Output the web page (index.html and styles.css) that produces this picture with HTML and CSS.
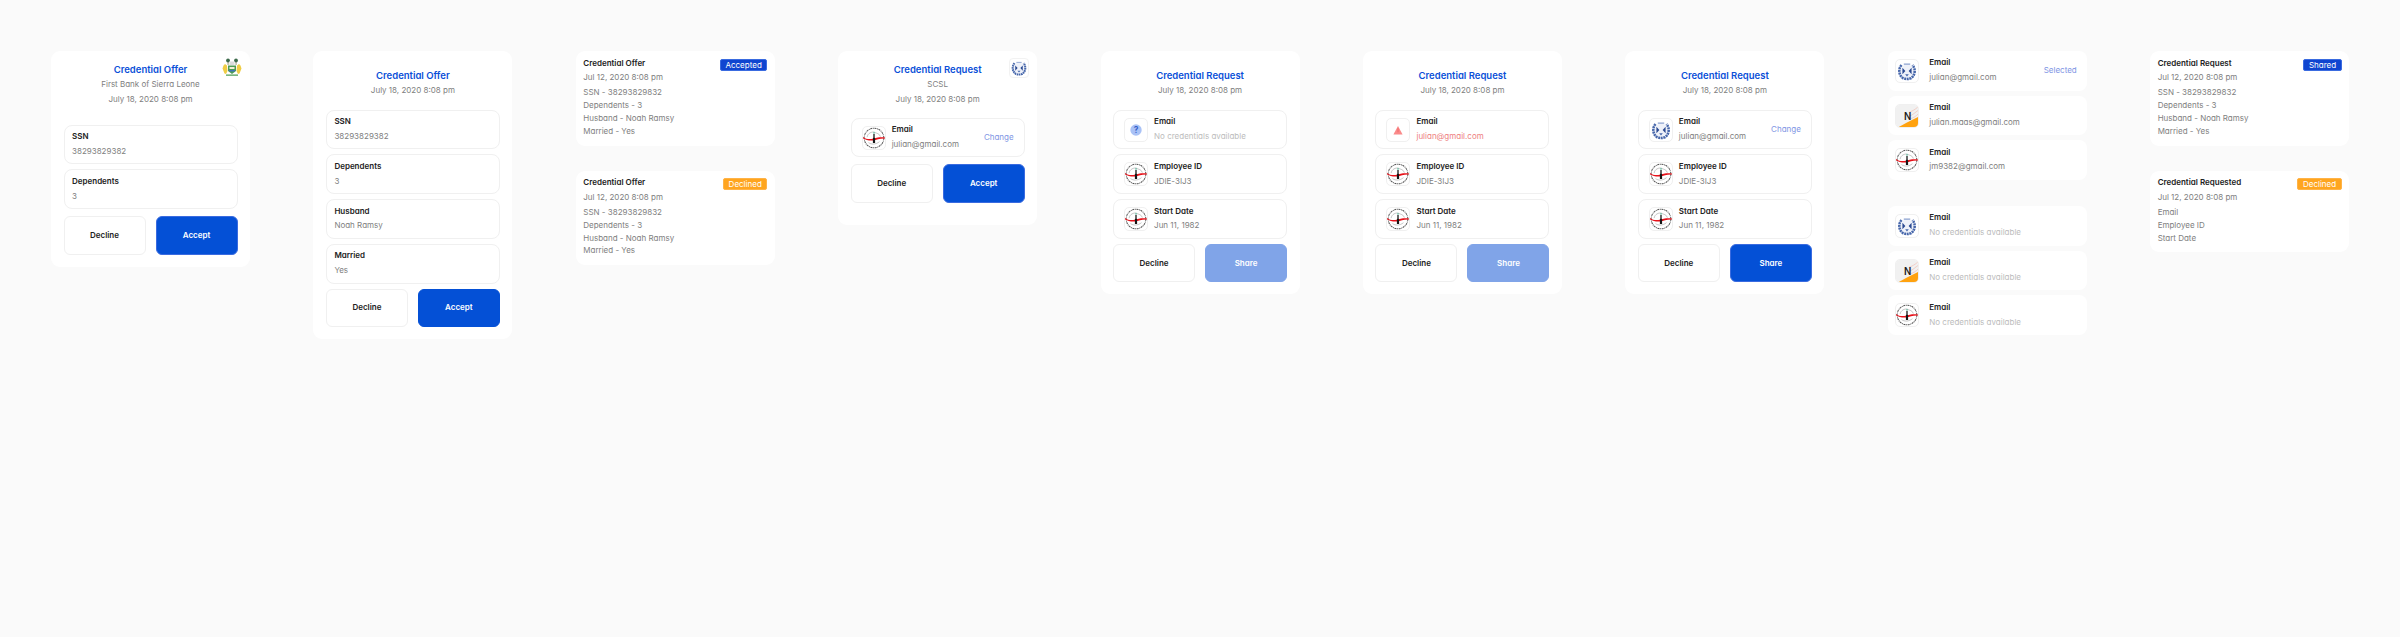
FILE: index.html
```html
<!DOCTYPE html>
<html>
<head>
    <meta charset="utf-8">
    <title>Credential cards</title>
    <link rel="stylesheet" href="styles.css">
</head>
<body>
<svg class="sprites" width="0" height="0">
    <symbol id="seal" viewBox="0 0 24 24">
        <circle cx="12" cy="12" r="10.700" fill="#fff" stroke="#555" stroke-width="1.100" stroke-dasharray="2.200 0.700 1 0.700"/>
        <path d="M4.500 11c.5-4 5-6.500 8.500-5 1.500.8 5 1 6 4.500M6 17c3 2.300 8 2.300 12-1" fill="none" stroke="#a8a8a8" stroke-width="0.700"/>
        <path d="M0 10.800c3 2.200 7 3 10.500 2s8-2 13.500-1.300v1c-6-.2-9 1.400-13 2.200-4 .5-8-.6-11-2.400z" fill="#e6121a"/>
        <path d="M11.300 7.500h1.400v4l.5 1v5h-2.400v-5l.5-1z" fill="#151515"/>
        <rect x="11.500" y="5.300" width="1" height="2.200" fill="#3fae8e"/>
    </symbol>
    <symbol id="wreath" viewBox="0 0 24 24">
        <ellipse cx="12" cy="12" rx="7" ry="7.500" fill="#eef1f9"/>
        <path d="M6 5.500C2.200 10 3 17 8 20c3 1 5 1 8 0 5-3 5.800-10 2-14.500" fill="none" stroke="#4767ab" stroke-width="2.800" stroke-dasharray="2.200 0.700"/>
        <path d="M7 8.500l3.200 3.500-3.200 3.500zM17 8.500l-3.200 3.500 3.200 3.500z" fill="#2b4a92"/>
        <path d="M8.500 4.500h7" stroke="#8ba1d0" stroke-width="1.200"/>
        <path d="M10 15.500h4l-2 2.500z" fill="#4767ab"/>
    </symbol>
    <symbol id="tile" viewBox="0 0 24 24">
        <rect width="24" height="24" fill="#f1f1f1"/>
        <path d="M14 8c3-1 7-3 10-6M15 12c3-1 6-4 9-6M16 15c3-1 6-3 8-5" fill="none" stroke="#f1c3b8" stroke-width="0.800"/>
        <path d="M3 24l9-5 12-6v11z" fill="#ffa20f"/>
    </symbol>
    <symbol id="arms" viewBox="0 0 20 20">
        <circle cx="6" cy="2.500" r="1.900" fill="#3c6a4a"/>
        <circle cx="14" cy="2.500" r="1.900" fill="#3c6a4a"/>
        <rect x="5.700" y="4" width="0.700" height="3" fill="#6b6b4a"/>
        <rect x="13.700" y="4" width="0.700" height="3" fill="#6b6b4a"/>
        <rect x="7.500" y="3.500" width="5" height="3.500" fill="#dcdcdc"/>
        <path d="M3 6l2 1.500L5.500 13l-1.500 3-1.500-.5-2-5 1-3zM17 6l-2 1.500-.5 5.500 1.500 3 1.500-.5 2-5-1-3z" fill="#efcd45"/>
        <path d="M6 7.500h8V13l-4 3-4-3z" fill="#4d9c55"/>
        <path d="M7.500 9h5v2h-5z" fill="#f4f0d6"/>
        <path d="M6.500 12h7l-1 1.500h-5z" fill="#3f74b8"/>
        <path d="M4 16.500h12v1.300H4z" fill="#4d9c55"/>
    </symbol>
</svg>

<div class="board">
    <div class="column">
        <div class="card">
            <svg class="card-logo card-logo--bare"><use href="#arms"/></svg>
            <div class="card-head card-head--wide">
                <div class="card-title">Credential Offer</div>
                <div class="muted">First Bank of Sierra Leone</div>
                <div class="muted">July 18, 2020 8:08 pm</div>
            </div>
            <div class="fields">
                <div class="field"><div class="field-text"><div class="label">SSN</div><div class="muted">38293829382</div></div></div>
                <div class="field"><div class="field-text"><div class="label">Dependents</div><div class="muted">3</div></div></div>
            </div>
            <div class="actions actions--loose">
                <div class="btn">Decline</div>
                <div class="btn btn-primary btn-ring">Accept</div>
            </div>
        </div>
    </div>

    <div class="column">
        <div class="card card--plain">
            <div class="card-head">
                <div class="card-title">Credential Offer</div>
                <div class="muted">July 18, 2020 8:08 pm</div>
            </div>
            <div class="fields">
                <div class="field"><div class="field-text"><div class="label">SSN</div><div class="muted">38293829382</div></div></div>
                <div class="field"><div class="field-text"><div class="label">Dependents</div><div class="muted">3</div></div></div>
                <div class="field"><div class="field-text"><div class="label">Husband</div><div class="muted">Noah Ramsy</div></div></div>
                <div class="field"><div class="field-text"><div class="label">Married</div><div class="muted">Yes</div></div></div>
            </div>
            <div class="actions">
                <div class="btn">Decline</div>
                <div class="btn btn-primary">Accept</div>
            </div>
        </div>
    </div>

    <div class="column column--history">
        <div class="history">
            <span class="badge">Accepted</span>
            <div class="label">Credential Offer</div>
            <div class="muted">Jul 12, 2020 8:08 pm</div>
            <ul class="history-list">
                <li>SSN - 38293829832</li>
                <li>Dependents - 3</li>
                <li>Husband - Noah Ramsy</li>
                <li>Married - Yes</li>
            </ul>
        </div>
        <div class="history">
            <span class="badge badge-orange">Declined</span>
            <div class="label">Credential Offer</div>
            <div class="muted">Jul 12, 2020 8:08 pm</div>
            <ul class="history-list">
                <li>SSN - 38293829832</li>
                <li>Dependents - 3</li>
                <li>Husband - Noah Ramsy</li>
                <li>Married - Yes</li>
            </ul>
        </div>
    </div>

    <div class="column">
        <div class="card card--short">
            <svg class="card-logo"><use href="#wreath"/></svg>
            <div class="card-head card-head--narrow">
                <div class="card-title">Credential Request</div>
                <div class="muted">SCSL</div>
                <div class="muted">July 18, 2020 8:08 pm</div>
            </div>
            <div class="fields">
                <div class="field">
                    <svg class="icon"><use href="#seal"/></svg>
                    <div class="field-text"><div class="label">Email</div><div class="muted">julian@gmail.com</div></div>
                    <span class="link">Change</span>
                </div>
            </div>
            <div class="actions actions--loose">
                <div class="btn">Decline</div>
                <div class="btn btn-primary btn-ring">Accept</div>
            </div>
        </div>
    </div>

    <div class="column">
        <div class="card card--plain">
            <div class="card-head">
                <div class="card-title">Credential Request</div>
                <div class="muted">July 18, 2020 8:08 pm</div>
            </div>
            <div class="fields">
                <div class="field">
                    <svg class="icon" viewBox="0 0 24 24">
                        <circle cx="12" cy="12" r="6.200" fill="#a9c2f6"/>
                        <text x="12" y="15.200" class="icon-mark" text-anchor="middle">?</text>
                    </svg>
                    <div class="field-text"><div class="label">Email</div><div class="faint">No credentials available</div></div>
                </div>
                <div class="field">
                    <svg class="icon"><use href="#seal"/></svg>
                    <div class="field-text"><div class="label">Employee ID</div><div class="muted">JDIE-3IJ3</div></div>
                </div>
                <div class="field">
                    <svg class="icon"><use href="#seal"/></svg>
                    <div class="field-text"><div class="label">Start Date</div><div class="muted">Jun 11, 1982</div></div>
                </div>
            </div>
            <div class="actions">
                <div class="btn">Decline</div>
                <div class="btn btn-primary btn-disabled">Share</div>
            </div>
        </div>
    </div>

    <div class="column">
        <div class="card card--plain">
            <div class="card-head">
                <div class="card-title">Credential Request</div>
                <div class="muted">July 18, 2020 8:08 pm</div>
            </div>
            <div class="fields">
                <div class="field">
                    <svg class="icon" viewBox="0 0 24 24">
                        <path d="M12 7.500l5 9.500H7z" fill="#fa8a8a"/>
                        <path d="M12 10v4.500" stroke="#f26a6a" stroke-width="1"/>
                    </svg>
                    <div class="field-text"><div class="label">Email</div><div class="error">julian@gmail.com</div></div>
                </div>
                <div class="field">
                    <svg class="icon"><use href="#seal"/></svg>
                    <div class="field-text"><div class="label">Employee ID</div><div class="muted">JDIE-3IJ3</div></div>
                </div>
                <div class="field">
                    <svg class="icon"><use href="#seal"/></svg>
                    <div class="field-text"><div class="label">Start Date</div><div class="muted">Jun 11, 1982</div></div>
                </div>
            </div>
            <div class="actions">
                <div class="btn">Decline</div>
                <div class="btn btn-primary btn-disabled">Share</div>
            </div>
        </div>
    </div>

    <div class="column">
        <div class="card card--plain">
            <div class="card-head">
                <div class="card-title">Credential Request</div>
                <div class="muted">July 18, 2020 8:08 pm</div>
            </div>
            <div class="fields">
                <div class="field">
                    <svg class="icon"><use href="#wreath"/></svg>
                    <div class="field-text"><div class="label">Email</div><div class="muted">julian@gmail.com</div></div>
                    <span class="link">Change</span>
                </div>
                <div class="field">
                    <svg class="icon"><use href="#seal"/></svg>
                    <div class="field-text"><div class="label">Employee ID</div><div class="muted">JDIE-3IJ3</div></div>
                </div>
                <div class="field">
                    <svg class="icon"><use href="#seal"/></svg>
                    <div class="field-text"><div class="label">Start Date</div><div class="muted">Jun 11, 1982</div></div>
                </div>
            </div>
            <div class="actions">
                <div class="btn">Decline</div>
                <div class="btn btn-primary btn-ring">Share</div>
            </div>
        </div>
    </div>

    <div class="column column--lists">
        <div class="picker">
            <div class="pick">
                <svg class="icon"><use href="#wreath"/></svg>
                <div class="field-text"><div class="label">Email</div><div class="muted">julian@gmail.com</div></div>
                <span class="link">Selected</span>
            </div>
            <div class="pick">
                <svg class="icon" viewBox="0 0 24 24"><use href="#tile" width="24" height="24"/><text x="12.700" y="16.700" class="tile-letter" text-anchor="middle">N</text></svg>
                <div class="field-text"><div class="label">Email</div><div class="muted">julian.maas@gmail.com</div></div>
            </div>
            <div class="pick">
                <svg class="icon"><use href="#seal"/></svg>
                <div class="field-text"><div class="label">Email</div><div class="muted">jm9382@gmail.com</div></div>
            </div>
        </div>
        <div class="picker">
            <div class="pick">
                <svg class="icon"><use href="#wreath"/></svg>
                <div class="field-text"><div class="label">Email</div><div class="faint">No credentials available</div></div>
            </div>
            <div class="pick">
                <svg class="icon" viewBox="0 0 24 24"><use href="#tile" width="24" height="24"/><text x="12.700" y="16.700" class="tile-letter" text-anchor="middle">N</text></svg>
                <div class="field-text"><div class="label">Email</div><div class="faint">No credentials available</div></div>
            </div>
            <div class="pick">
                <svg class="icon"><use href="#seal"/></svg>
                <div class="field-text"><div class="label">Email</div><div class="faint">No credentials available</div></div>
            </div>
        </div>
    </div>

    <div class="column column--history">
        <div class="history">
            <span class="badge">Shared</span>
            <div class="label">Credential Request</div>
            <div class="muted">Jul 12, 2020 8:08 pm</div>
            <ul class="history-list">
                <li>SSN - 38293829832</li>
                <li>Dependents - 3</li>
                <li>Husband - Noah Ramsy</li>
                <li>Married - Yes</li>
            </ul>
        </div>
        <div class="history">
            <span class="badge badge-orange">Declined</span>
            <div class="label">Credential Requested</div>
            <div class="muted">Jul 12, 2020 8:08 pm</div>
            <ul class="history-list">
                <li>Email</li>
                <li>Employee ID</li>
                <li>Start Date</li>
            </ul>
        </div>
    </div>
</div>
</body>
</html>
```

FILE: styles.css
```css
html, body {
  margin: 0;
  background: #fafafa;
}

body {
  font-family: "Inter", "Lato", sans-serif;
  font-feature-settings: "cv11";
  font-size: 8px;
  line-height: 14.7px;
  color: #808080;
  height: 637px;
  overflow: hidden;
}

.sprites {
  position: absolute;
}

.board {
  display: flex;
  align-items: flex-start;
  gap: 63.4px;
  padding: 51px 0 0 51px;
}

.column {
  flex: 0 0 199px;
  width: 199px;
  display: flex;
  flex-direction: column;
}

.column--history {
  gap: 25px;
}

.column--lists {
  gap: 26px;
}

.card {
  position: relative;
  background: #fff;
  border-radius: 9px;
  padding: 0 12.5px 12px;
}

.card--short {
  padding-bottom: 22px;
}

.card-head {
  text-align: center;
  padding: 17.7px 0 11.7px;
}

.card-head--wide {
  padding: 11.7px 0 18px;
}

.card-head--narrow {
  padding: 11.7px 0 11px;
}

.card-title {
  font-size: 9.5px;
  font-weight: 600;
  color: #0a4fd8;
}

.card-logo {
  position: absolute;
  top: 7px;
  right: 8px;
  width: 20px;
  height: 20px;
  box-sizing: border-box;
  background: #fff;
  border: 1px solid #f2f2f2;
  border-radius: 4px;
}

.card-logo--bare {
  border: 0;
  background: none;
}

.fields {
  display: flex;
  flex-direction: column;
  gap: 5px;
}

.field {
  display: flex;
  align-items: center;
  gap: 6px;
  height: 39.7px;
  box-sizing: border-box;
  padding: 0 10px 0 7.5px;
  background: #fff;
  border: 1px solid #f0f0f0;
  border-radius: 8px;
}

.field .icon {
  margin-left: 2.5px;
}

.field-text {
  flex: 1;
  min-width: 0;
  padding-bottom: 1.5px;
}

.label {
  font-weight: 600;
  color: #222;
}

.faint {
  color: #bcbcbc;
}

.error {
  color: #ee8080;
}

.link {
  color: #8095e4;
}

.icon {
  flex: 0 0 24px;
  width: 24px;
  height: 24px;
  box-sizing: border-box;
  background: #fff;
  border: 1px solid #f0f0f0;
  border-radius: 5px;
  overflow: hidden;
}

.icon-mark {
  font-size: 9px;
  font-weight: 700;
  fill: #3560c8;
}

.tile-letter {
  font-size: 10.5px;
  font-weight: 600;
  fill: #1a1a1a;
}

.actions {
  display: grid;
  grid-template-columns: 1fr 1fr;
  gap: 10px;
  margin-top: 5px;
}

.actions--loose {
  margin-top: 7px;
}

.btn {
  height: 38.5px;
  box-sizing: border-box;
  display: flex;
  align-items: center;
  justify-content: center;
  background: #fff;
  border: 1px solid #f0f0f0;
  border-radius: 6px;
  font-weight: 600;
  color: #222;
}

.btn-primary {
  background: #0450d6;
  border-color: #0450d6;
  color: #fff;
}

.btn-ring {
  border-color: #3a6be0;
}

.btn-disabled {
  background: #80a4e8;
  border-color: #80a4e8;
}

.history {
  position: relative;
  background: #fff;
  border-radius: 9px;
  padding: 4.5px 7.5px 8px;
}

.history-list {
  list-style: none;
  margin: 1.5px 0 0;
  padding: 0;
}

.history-list li {
  line-height: 12.8px;
}

.badge {
  position: absolute;
  top: 7.7px;
  right: 7.5px;
  height: 12px;
  box-sizing: border-box;
  padding: 0 4.5px;
  line-height: 10px;
  background: #0f45d0;
  border: 1px solid #3a6be0;
  border-radius: 2px;
  color: #fff;
}

.badge-orange {
  background: #ffa51f;
  border-color: #ffb347;
}

.picker {
  display: flex;
  flex-direction: column;
  gap: 5px;
}

.pick {
  display: flex;
  align-items: center;
  gap: 10px;
  height: 39.7px;
  padding: 0 10px 0 7.5px;
  background: #fff;
  border-radius: 8px;
}
```
